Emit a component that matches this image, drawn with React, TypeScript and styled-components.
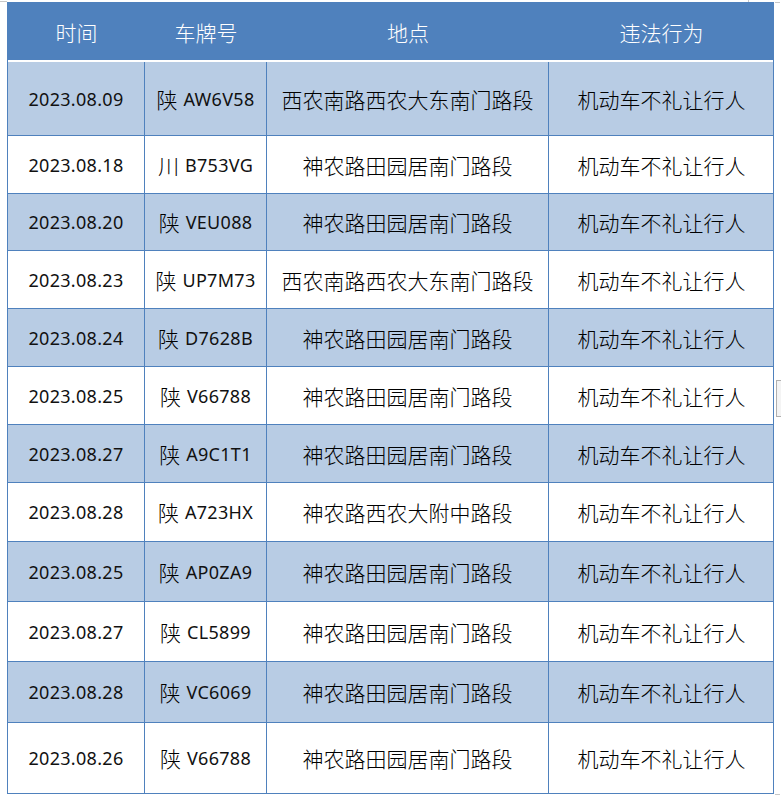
import React from "react";
import styled, { createGlobalStyle } from "styled-components";

const GlobalStyle = createGlobalStyle`
  html, body { margin: 0; padding: 0; background: #ffffff; }
  body { font-family: "Noto Sans", "Noto Sans CJK SC", sans-serif; color: #111; overflow: hidden; }
`;

const BLUE = "#4f81bd";
const LIGHT = "#b8cce4";
const COLS = "137px 122px 282px 225px";

const Page = styled.div`
  position: relative;
  width: 781px;
  height: 796px;
  padding: 2px 0 0 7px;
  box-sizing: border-box;
`;

const Table = styled.div`
  width: 767px;
  box-sizing: border-box;
  border-left: 1px solid ${BLUE};
  border-right: 1px solid ${BLUE};
  border-bottom: 1px solid ${BLUE};
  display: flex;
  flex-direction: column;
`;

const HeaderRow = styled.div`
  display: grid;
  grid-template-columns: ${COLS};
  height: 58px;
  background: ${BLUE};
  border-bottom: 2px solid #ffffff;
`;

const HeaderCell = styled.div`
  display: flex;
  align-items: center;
  justify-content: center;
  color: #ffffff;
  font-family: "Noto Sans CJK SC", sans-serif;
  font-weight: 300;
  font-size: 21px;
  padding-top: 2px;
`;

const Row = styled.div<{ $h: number; $shaded: boolean; $last?: boolean }>`
  display: grid;
  grid-template-columns: ${COLS};
  height: ${(p) => p.$h}px;
  box-sizing: border-box;
  background: ${(p) => (p.$shaded ? LIGHT : "#ffffff")};
  border-bottom: ${(p) => (p.$last ? "none" : `1px solid ${BLUE}`)};
`;

const Cell = styled.div<{ $last?: boolean }>`
  display: flex;
  align-items: center;
  justify-content: center;
  white-space: nowrap;
  border-right: ${(p) => (p.$last ? "none" : `1px solid ${BLUE}`)};
  font-size: 18px;
  letter-spacing: 0.3px;
  color: #111;
`;

const Cjk = styled.span`
  font-family: "Noto Sans CJK SC", sans-serif;
  font-weight: 300;
  font-size: 21px;
  letter-spacing: 0;
  color: #000;
`;

const Latin = styled.span`
  font-family: "Noto Sans", sans-serif;
  font-size: 18px;
  margin-left: 6px;
`;

const Handle = styled.div`
  position: absolute;
  right: 0;
  top: 380px;
  width: 4px;
  height: 35px;
  border: 1px solid #b0b0b0;
  border-right: none;
  background: #f4f4f4;
`;

const CornerMark = styled.div<{ $left: number; $top: number; $w: number; $h: number }>`
  position: absolute;
  left: ${(p) => p.$left}px;
  top: ${(p) => p.$top}px;
  width: ${(p) => p.$w}px;
  height: ${(p) => p.$h}px;
  background: #c8c8c8;
`;

type Rec = { date: string; prov: string; plate: string; place: string; act: string };

const rows: Rec[] = [
  { date: "2023.08.09", prov: "陕", plate: "AW6V58", place: "西农南路西农大东南门路段", act: "机动车不礼让行人" },
  { date: "2023.08.18", prov: "川", plate: "B753VG", place: "神农路田园居南门路段", act: "机动车不礼让行人" },
  { date: "2023.08.20", prov: "陕", plate: "VEU088", place: "神农路田园居南门路段", act: "机动车不礼让行人" },
  { date: "2023.08.23", prov: "陕", plate: "UP7M73", place: "西农南路西农大东南门路段", act: "机动车不礼让行人" },
  { date: "2023.08.24", prov: "陕", plate: "D7628B", place: "神农路田园居南门路段", act: "机动车不礼让行人" },
  { date: "2023.08.25", prov: "陕", plate: "V66788", place: "神农路田园居南门路段", act: "机动车不礼让行人" },
  { date: "2023.08.27", prov: "陕", plate: "A9C1T1", place: "神农路田园居南门路段", act: "机动车不礼让行人" },
  { date: "2023.08.28", prov: "陕", plate: "A723HX", place: "神农路西农大附中路段", act: "机动车不礼让行人" },
  { date: "2023.08.25", prov: "陕", plate: "AP0ZA9", place: "神农路田园居南门路段", act: "机动车不礼让行人" },
  { date: "2023.08.27", prov: "陕", plate: "CL5899", place: "神农路田园居南门路段", act: "机动车不礼让行人" },
  { date: "2023.08.28", prov: "陕", plate: "VC6069", place: "神农路田园居南门路段", act: "机动车不礼让行人" },
  { date: "2023.08.26", prov: "陕", plate: "V66788", place: "神农路田园居南门路段", act: "机动车不礼让行人" },
];

const heights = [74, 58, 57, 58, 58, 58, 58, 59, 60, 60, 61, 70];

export default function App() {
  return (
    <>
      <GlobalStyle />
      <Page>
        <CornerMark $left={0} $top={1} $w={7} $h={1} />
        <CornerMark $left={748} $top={0} $w={1} $h={2} />
        <CornerMark $left={775} $top={2} $w={5} $h={1} />
        <CornerMark $left={775} $top={794} $w={5} $h={1} />
        <Table>
          <HeaderRow>
            <HeaderCell>时间</HeaderCell>
            <HeaderCell>车牌号</HeaderCell>
            <HeaderCell>地点</HeaderCell>
            <HeaderCell>违法行为</HeaderCell>
          </HeaderRow>
          {rows.map((r, i) => (
            <Row key={i} $h={heights[i]} $shaded={i % 2 === 0} $last={i === rows.length - 1}>
              <Cell>{r.date}</Cell>
              <Cell>
                <Cjk>{r.prov}</Cjk>
                <Latin>{r.plate}</Latin>
              </Cell>
              <Cell>
                <Cjk>{r.place}</Cjk>
              </Cell>
              <Cell $last>
                <Cjk>{r.act}</Cjk>
              </Cell>
            </Row>
          ))}
        </Table>
        <Handle />
      </Page>
    </>
  );
}
